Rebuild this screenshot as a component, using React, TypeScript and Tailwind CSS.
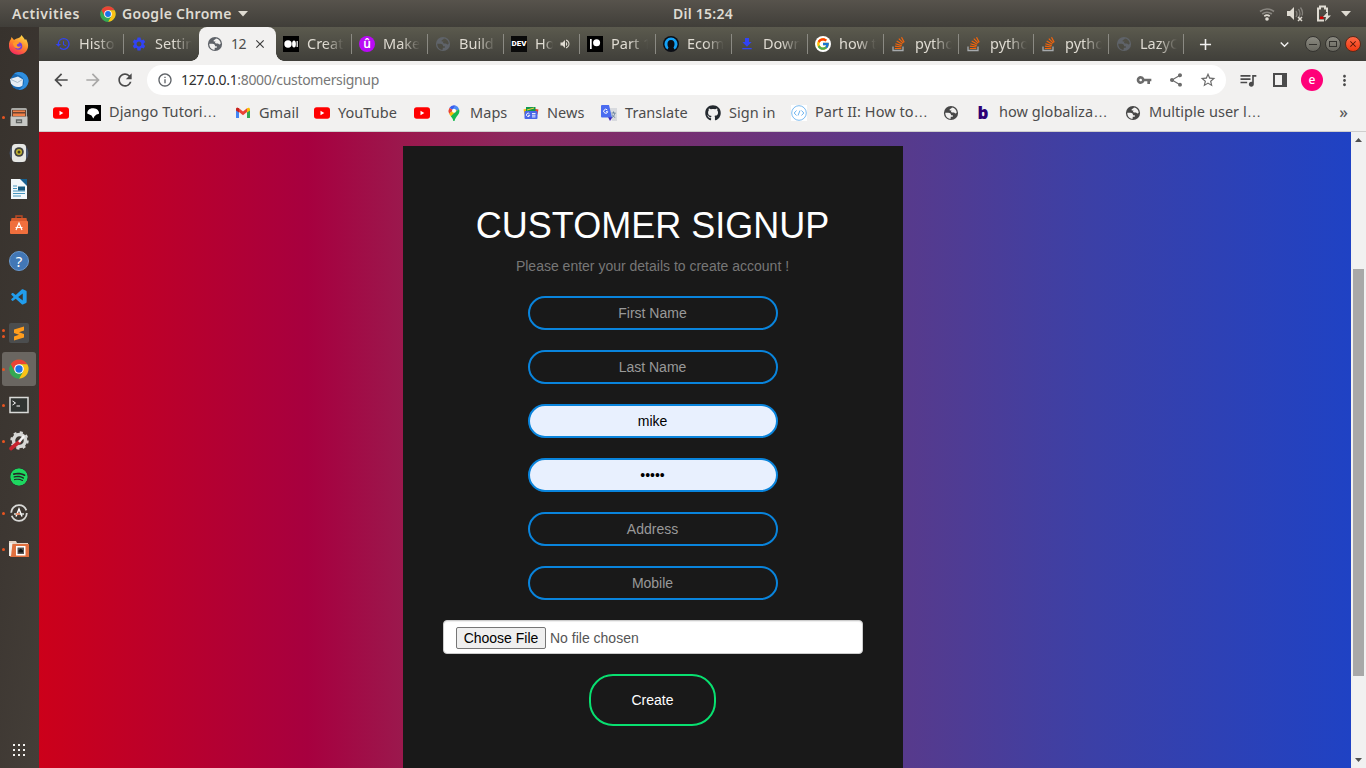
import React from "react";
import {
  MdArrowBack, MdArrowForward, MdRefresh, MdHistory, MdSettings, MdClose, MdVolumeUp,
  MdFileDownload, MdAdd, MdExpandMore, MdOutlineInfo, MdVpnKey, MdShare, MdStarBorder, MdQueueMusic,
  MdMoreVert,
} from "react-icons/md";
import { FcGoogle } from "react-icons/fc";
import { FaGithub, FaSpotify } from "react-icons/fa";
import { VscVscode } from "react-icons/vsc";

type Kids = { children?: React.ReactNode };

function Chrome({ className = "size-4" }: { className?: string }) {
  return (
    <svg viewBox="0 0 48 48" className={className}>
      <circle cx="24" cy="24" r="23" fill="#34a853" />
      <path d="M24 24 14.500 40.500 4.100 12.500A23 23 0 0 1 43.900 12.500H24Z" fill="#ea4335" />
      <path d="M43.900 12.500A23 23 0 0 1 24 47L34 29.500 24 12.500Z" fill="#fbc116" />
      <path d="M4.100 12.500 14 29.700 24 35 34 29.700 24 47A23 23 0 0 1 4.100 12.500Z" fill="#34a853" />
      <circle cx="24" cy="24" r="11.500" fill="#fff" />
      <circle cx="24" cy="24" r="8.800" fill="#1a73e8" />
    </svg>
  );
}

function StackOverflow() {
  return (
    <svg viewBox="0 0 16 16" className="size-4" fill="none" strokeWidth="1.300">
      <path d="M2 10.500V14.500H12V10.500" stroke="#a6aaad" />
      <path d="M3.800 12.500H10.300M3.900 10.200 10.400 11M4.400 7.700 10.700 9.600M5.700 5.100 11.300 8.300M7.800 2.700 12.200 7.200M10.500 1.200 13.200 6.400" stroke="#f4640a" strokeWidth="1.200" />
    </svg>
  );
}

function YouTube() {
  return (
    <svg viewBox="0 0 16 16" className="size-4">
      <rect y="2.300" width="16" height="11.400" rx="2.700" fill="#f00" />
      <path d="M6.500 5.800v4.400L10.300 8z" fill="#fff" />
    </svg>
  );
}

function Medium() {
  return (
    <svg viewBox="0 0 16 16" className="size-4">
      <path d="M0 0h16v16H0z" />
      <circle cx="5" cy="8" r="3.700" fill="#fff" />
      <ellipse cx="11" cy="8" rx="1.900" ry="3.500" fill="#fff" />
      <path d="M14.200 5v6" stroke="#fff" strokeWidth="1.200" />
    </svg>
  );
}

function Patreon() {
  return (
    <svg viewBox="0 0 16 16" className="size-4">
      <path d="M0 0h16v16H0z" />
      <path d="M3 3h1.700v10H3z" fill="#fff" />
      <circle cx="9.600" cy="6.800" r="3.500" fill="#fff" />
    </svg>
  );
}

function Head() {
  return (
    <svg viewBox="0 0 16 16" className="size-4">
      <circle cx="8" cy="8" r="8" fill="#0b0d14" />
      <path d="M4.500 13.500A6.500 6.500 0 1 1 11.500 13.500L10.500 11.500C12 9.500 12.300 4 8 4S4 9.500 5.500 11.500Z" fill="#14a1f5" />
    </svg>
  );
}

function Django() {
  return (
    <svg viewBox="0 0 16 16" className="size-4">
      <path d="M0 0h16v16H0z" />
      <path d="M2.200 8.500C2.200 5 5 2.800 8.500 3.200c3.500.2 6 2.800 5.500 5.600L11.500 9.500 9.500 11.200 8.300 13.500 6.500 10.500Z" fill="#fff" />
    </svg>
  );
}

function Gmail() {
  return (
    <svg viewBox="0 0 16 16" className="size-4">
      <path d="M1 4v9h3V7z" fill="#4285f4" />
      <path d="M12 7v6h3V4z" fill="#34a853" />
      <path d="M1 4.300C1 2.500 2.700 2.300 4 3.300L8 6.500l4-3.200v3.800L8 10.300 4 7.100Z" fill="#ea4335" />
      <path d="M12 3.300c1.500-1.100 3-.5 3 1.200v1L12 7.600z" fill="#fbbc04" />
      <path d="M4 3.300C2.500 2.200 1 2.800 1 4.500v1l3 2.100z" fill="#c5221f" />
    </svg>
  );
}

function Maps() {
  return (
    <svg viewBox="0 0 16 16" className="size-4">
      <path d="M3.300 3.100A5.700 5.700 0 0 1 9.500.5L7 5z" fill="#3b5ff0" />
      <path d="M9.500.5A5.700 5.700 0 0 1 13 4L6 11.500 4.500 7Z" fill="#4b8bf5" />
      <path d="M3.300 3.100A5.800 5.800 0 0 0 3.200 9L7 5Z" fill="#ea4335" />
      <path d="M3.200 9 8 4l3 1.500-6 6Z" fill="#fbbc04" />
      <path d="M13 4C15 9 9.500 11 8.500 16H7.300C7 13.500 5.800 12.500 4.800 11.200Z" fill="#16b950" />
      <circle cx="8" cy="5.800" r="2" fill="#fff" />
    </svg>
  );
}

function News() {
  return (
    <svg viewBox="0 0 16 16" className="size-4">
      <path d="m.5 4.500 4-1 1 5-4 1z" fill="#fbbc04" />
      <path d="m10 3.500 5.500 1-1 5-5-1z" fill="#ea4335" />
      <path d="M3 2h9.500v6H3z" fill="#12994a" />
      <path d="m4 5 7-2" stroke="#f4cf3b" />
      <rect x="1.500" y="6" width="13" height="8" rx="1" fill="#4866e8" />
      <path d="M6.500 8.800a1.700 1.700 0 1 0 .3 1.500H5M9 8.500h3.500M9 10.200h3.500M9 11.900h3.500" stroke="#fff" fill="none" strokeWidth=".9" />
    </svg>
  );
}

function Translate() {
  return (
    <svg viewBox="0 0 16 16" className="size-4">
      <path d="M7 3h9v13h-5z" fill="#d8dade" />
      <path d="m7 12 4.500 0-2.500 4z" fill="#3d22b8" />
      <path d="M1 0h7l3 12.500H1a1 1 0 0 1-1-1V1a1 1 0 0 1 1-1z" fill="#4b6cf0" />
      <path d="M6.300 5a2 2 0 1 0 .4 1.700H5" fill="none" stroke="#fff" />
      <path d="M10.500 8h4M12.500 6.500V8M14 8c-.5 2-1.500 3.500-3 4.500M11.200 9.500c.6 1.500 1.700 2.500 3 3" fill="none" stroke="#607d9b" strokeWidth=".9" />
    </svg>
  );
}

function CodeBadge() {
  return (
    <svg viewBox="0 0 16 16" className="size-4" fill="none" stroke="#5aa9ec">
      <path d="M0 0h16v16H0z" fill="#fff" stroke="none" />
      <circle cx="8" cy="8" r="7.300" strokeWidth=".8" />
      <path d="m5.500 5.500-2.300 2.500 2.300 2.500M10.500 5.500l2.300 2.500-2.300 2.500M9 5.500l-2 5" strokeWidth=".9" />
    </svg>
  );
}

function LetterB() {
  return <span className="flex size-4 items-center justify-center text-[17px] leading-none font-black text-[#2c0076]">b</span>;
}

function Globe({ className }: { className: string }) {
  return (
    <svg viewBox="0 0 16 16" className={`size-4 ${className}`} fill="currentColor">
      <path
        fillRule="evenodd"
        d="M8 .9a7.100 7.100 0 1 0 0 14.200A7.100 7.100 0 0 0 8 .9ZM2.300 7.700H5.400C7.300 7.700 8.100 8.700 8 10.300H9.800V11.700H7.700V13.700C4.700 13.900 2.200 11.200 2.300 7.700ZM9 2.400C11.700 2.800 13.600 5 13.700 7.600C13.200 8.600 12.200 8.800 11.600 8C11.100 7.300 10.300 7.600 9.300 7.500C7.900 7.300 7.600 6.200 8.600 5.400H6.700V4.200C6.700 3.400 8.400 3.900 9 2.400Z"
      />
    </svg>
  );
}

const TabGlobe = () => <Globe className="text-[#5f6369]" />;
const MarkGlobe = () => <Globe className="text-[#474747]" />;

function Tab({ icon, title, sound, narrow }: { icon: React.ReactNode; title: string; sound?: boolean; narrow?: boolean }) {
  return (
    <div className={`flex shrink-0 items-center pl-[7px] ${narrow ? "w-[75px]" : "w-[76px]"}`}>
      <span className="flex w-4 shrink-0 items-center justify-center">{icon}</span>
      <span className={`mb-[2px] ml-2 h-6 shrink-0 overflow-hidden whitespace-nowrap text-[14.500px] leading-6 text-[#dfdbd2] [mask-image:linear-gradient(to_right,#000_50%,transparent)] ${sound ? "w-[18px]" : "w-[37px]"}`}>{title}</span>
      {sound && <MdVolumeUp className="ml-[6px] size-3 shrink-0 text-[#dfdbd2]" />}
      <span className="ml-auto h-5 w-px bg-[#8b8a83]" />
    </div>
  );
}

function ActiveTab() {
  return (
    <div className="relative -ml-px flex w-[77px] shrink-0 items-center rounded-t-lg bg-[#f2f1f0] pl-2">
      <span className="absolute bottom-0 -left-2 size-2 bg-[radial-gradient(circle_at_0_0,transparent_7.500px,#f2f1f0_8px)]" />
      <span className="absolute -right-2 bottom-0 size-2 bg-[radial-gradient(circle_at_100%_0,transparent_7.500px,#f2f1f0_8px)]" />
      <TabGlobe />
      <span className="mb-[2px] ml-[8px] text-[14px] tracking-[-.4px] text-[#4c4c4c]">12</span>
      <MdClose className="ml-[7px] size-[14px] text-[#3c3c3c]" />
    </div>
  );
}

function Bookmark({ icon, label, width }: { icon: React.ReactNode; label?: string; width?: string }) {
  const cut = label?.endsWith("…");
  return (
    <div className="mr-4 flex shrink-0 items-center">
      <span className="flex w-4 items-center justify-center">{icon}</span>
      {label && (
        <span className={`mb-[2px] ml-2 whitespace-nowrap text-[14.500px] leading-5 tracking-[.05px] text-[#4c4c4c] ${width}`}>
          {cut ? label.slice(0, -1) : label}
          {cut && <span className="font-['Liberation_Sans']">…</span>}
        </span>
      )}
    </div>
  );
}

function DockItem({ children, running, active }: Kids & { running?: number; active?: boolean }) {
  return (
    <div className="flex h-9 w-[39px] shrink-0 items-center">
      <div className={`ml-[2px] flex h-[34px] w-[34px] items-center rounded-[3px] ${active ? "bg-[#6a6661]" : ""}`}>
        <div className="flex w-[7px] flex-col items-start gap-[3px]">
          {running && <span className="size-[3px] rounded-full bg-[#e95420]" />}
          {running === 2 && <span className="size-[3px] rounded-full bg-[#e95420]" />}
        </div>
        <div className="flex size-5 items-center justify-center">{children}</div>
      </div>
    </div>
  );
}

function Dock() {
  return (
    <nav className="flex w-[39px] shrink-0 flex-col bg-[linear-gradient(100deg,#37322d,#3d3732_55%,#443e38)]">
      <DockItem>
        <svg viewBox="0 0 20 20" className="size-5">
          <defs>
            <linearGradient id="fox" x1=".8" y1="0" x2=".3" y2="1"><stop offset="0" stopColor="#ffe14a" /><stop offset=".5" stopColor="#ff8a2a" /><stop offset="1" stopColor="#f5265f" /></linearGradient>
          </defs>
          <path d="M12.500 0c1 2 3 3 3.500 5l1-1c3 5 3 10-1 13.500S4 20 1.500 16-.5 7 2 4l.5-2 2.500 3c2-2 6-1 7.500-5Z" fill="url(#fox)" />
          <circle cx="9.500" cy="11" r="3.800" fill="#7540d8" />
          <path d="M4 8c3-2 5.500-1.500 6.500 0l-2.500 1.500c-1 2 2 3 4 1.500-1 4-8 3-8-3Z" fill="#ff9a2b" />
        </svg>
      </DockItem>
      <DockItem>
        <svg viewBox="0 0 20 20" className="size-5">
          <circle cx="10.500" cy="10" r="9" fill="#1767b2" />
          <path d="M5 2.500c6-4 15 0 14.500 8-1 6-6 9-10 8 6-2 8-11 1-14Z" fill="#2f8fe0" />
          <path d="m1 8 8-2.500 5 3-.5 6c-4 3-9.500 1-11.500-2Z" fill="#e6ecf3" />
          <path d="m2 8.500 6.500 3 5-3" fill="none" stroke="#a8bac9" />
        </svg>
      </DockItem>
      <DockItem running={1}>
        <svg viewBox="0 0 20 20" className="size-5">
          <rect x="2" y="1" width="16" height="18" rx="1.500" fill="#a9a9a5" />
          <path d="M3 3h14v7H3z" fill="#6d4330" /><path d="M4 3.500h12v1.500H4zM4 6.500h12v2.500H4z" fill="#ef8048" />
          <path d="M1.500 9.500h17V19h-17z" fill="#c7c8c5" /><path d="M7.500 15.500v-2.500h5v2.500z" fill="none" stroke="#5f6260" strokeWidth="1.300" />
        </svg>
      </DockItem>
      <DockItem>
        <svg viewBox="0 0 20 20" className="size-5">
          <circle cx="10" cy="10" r="9.500" fill="#47536a" />
          <rect x="3" y="1" width="14" height="18" rx="3.500" fill="#e6e7e4" />
          <circle cx="10" cy="9" r="4.800" fill="#41413f" /><circle cx="10" cy="9" r="3" fill="#c3b632" /><circle cx="10" cy="9" r="1.500" fill="#403c25" />
        </svg>
      </DockItem>
      <DockItem>
        <svg viewBox="0 0 20 20" className="size-5">
          <path d="M2 0h11l5 6v14H2z" fill="#f4f8fa" /><path d="M11 0h7v7z" fill="#18608f" />
          <path d="M4 7h4M4 9.500h4M4 12h12M4 14.500h12M4 17h8" stroke="#4795bd" /><path d="M9 7.500h7v4H9z" fill="#175a80" />
        </svg>
      </DockItem>
      <DockItem>
        <svg viewBox="0 0 20 20" className="size-5">
          <path d="M7 4V1h6v3" fill="none" stroke="#bd4a25" strokeWidth="1.400" /><path d="M2.500 3h15l1 5h-17z" fill="#d85a2c" />
          <rect x="1" y="6" width="18" height="13" rx="1" fill="#f06f3d" />
          <path d="m7 15 3-7 3 7M6.500 12.500h7" fill="none" stroke="#fff" strokeWidth="1.200" />
        </svg>
      </DockItem>
      <DockItem>
        <span className="flex size-5 items-center justify-center rounded-full border border-[#6998cd] bg-[#4277b5] text-[15px] leading-none text-white">?</span>
      </DockItem>
      <DockItem><VscVscode className="size-[19px] text-[#219ded]" /></DockItem>
      <DockItem running={2}>
        <svg viewBox="0 0 20 20" className="size-5">
          <rect width="20" height="20" rx="2" fill="#4b4d4e" /><path d="m5 6.500 10-3v4l-5 1.700 5 1.800v3.500l-10 3v-4l5-1.700-5-1.800z" fill="#ff9d1d" />
        </svg>
      </DockItem>
      <DockItem running={1} active><Chrome className="size-5" /></DockItem>
      <DockItem running={1}>
        <svg viewBox="0 0 20 20" className="size-5">
          <path d="M1 2.500h18v15H1z" fill="#303432" stroke="#d9dad8" strokeWidth="1.500" /><path d="m3.500 6 3 2-3 2M7.500 11H11" fill="none" stroke="#fff" />
        </svg>
      </DockItem>
      <DockItem running={1}>
        <svg viewBox="0 0 20 20" className="size-5">
          <circle cx="10.500" cy="9.500" r="6" fill="none" stroke="#d7d7d5" strokeWidth="3.500" />
          <circle cx="10.500" cy="9.500" r="8.200" fill="none" stroke="#d7d7d5" strokeWidth="2" strokeDasharray="3 3.450" />
          <path d="m2 17.500 8-6.500" stroke="#c7232e" strokeWidth="3.600" strokeLinecap="round" /><path d="m10 11 5-6" stroke="#f5f5f5" strokeWidth="2.500" />
        </svg>
      </DockItem>
      <DockItem><FaSpotify className="size-[18px] rounded-full bg-[#252525] text-[#1ed760]" /></DockItem>
      <DockItem running={1}>
        <svg viewBox="0 0 20 20" className="size-5" fill="none">
          <circle cx="10" cy="10" r="7.800" stroke="#d9d9d7" strokeWidth="1.800" strokeDasharray="21.500 3" />
          <path d="m7 13.500 3-7.500 3 7.500" stroke="#fff" strokeWidth="1.500" /><path d="M5 11h10" stroke="#e8eceb" strokeWidth="1.400" /><path d="M7 11h4" stroke="#ef6a35" strokeWidth="1.300" />
        </svg>
      </DockItem>
      <DockItem running={1}>
        <svg viewBox="0 0 20 20" className="size-5">
          <path d="M0 2h7l1 2h11v13H0z" fill="#e4d2c3" /><path d="M3 5h17v13H1z" fill="#e0703f" /><path d="M0 4h3.500L2 17H0z" fill="#f3eee9" />
          <path d="M7 7h9.500v9.500H7z" fill="#fff" /><path d="M8.500 8.500H15v6.500H8.500z" fill="#555" /><path d="M9.500 13.500v-2l2.250-2 2.250 2v2z" fill="#161616" />
        </svg>
      </DockItem>
      <div className="mt-auto mb-3 ml-[13px] grid w-3 grid-cols-3 gap-[3px]">
        {Array.from({ length: 9 }, (_, i) => <span key={i} className="size-[2px] bg-[#f4f3f0]" />)}
      </div>
    </nav>
  );
}

function SystemBar() {
  return (
    <header className="grid h-[27px] shrink-0 grid-cols-[1fr_auto_1fr] items-center bg-[linear-gradient(#57534c,#403e39)] text-[14px] font-semibold text-[#dfdbd2]">
      <div className="flex items-center pl-3">
        <span className="w-[88px] tracking-[.55px]">Activities</span>
        <Chrome />
        <span className="ml-[6px] w-[112px] whitespace-nowrap tracking-[.3px]">Google Chrome</span>
        <svg viewBox="0 0 10 6" className="ml-[4px] h-[6px] w-[10px]"><path d="M0 0h10L5 5.500z" fill="#dfdbd2" /></svg>
      </div>
      <span className="ml-[41px] w-[61px] whitespace-nowrap tracking-[.25px]">Dil 15:24</span>
      <div className="flex items-center justify-end pr-[15px] text-[#dfdbd2]">
        <svg viewBox="0 0 16 14" className="h-[14px] w-4" fill="none" strokeWidth="1.700">
          <path d="M1 4.500q7-5 14 0M3.200 7q4.800-3.500 9.600 0" stroke="#898680" /><path d="M5.300 9.200q2.700-2 5.400 0" stroke="#dfdbd2" /><circle cx="8" cy="12" r="1.800" fill="#dfdbd2" />
        </svg>
        <svg viewBox="0 0 18 16" className="ml-[11px] h-4 w-[18px]" fill="none">
          <path d="M1 5h3l4-4v13l-4-4H1z" fill="#dfdbd2" /><path d="M10 5q2 3 0 6M12.500 3q3 5 0 9M14.500 1.500q3 4 1.500 8" stroke="#85827c" strokeWidth="1.300" /><path d="m12 11 4 4m0-4-4 4" stroke="#dfdbd2" strokeWidth="1.500" />
        </svg>
        <svg viewBox="0 0 15 17" className="ml-[12px] h-[17px] w-[15px]" fill="none">
          <path d="M8 15.500H2V3.500H4V1.500H9V3.500H11V7" stroke="#dfdbd2" strokeWidth="2" /><path d="M4 11.500h3.500V14H4z" fill="#d40000" /><path d="m12 6.500-5 5.500h3l-1 4.500 6-6h-3z" fill="#dfdbd2" />
        </svg>
        <svg viewBox="0 0 10 6" className="ml-[10px] h-[6px] w-[10px]"><path d="M0 0h10L5 5.500z" fill="#dfdbd2" /></svg>
      </div>
    </header>
  );
}

function TabStrip() {
  return (
    <div className="flex h-[34px] shrink-0 bg-[linear-gradient(#5b5a4e,#403f3a)] pl-[9px]">
      <Tab icon={<MdHistory className="size-4 text-[#3143f5]" />} title="History" />
      <Tab icon={<MdSettings className="size-4 text-[#3143f5]" />} title="Settings" />
      <ActiveTab />
      <Tab icon={<Medium />} title="Create" />
      <Tab icon={<span className="flex size-4 items-center justify-center rounded-full bg-[#b90af5] text-[12px] leading-none font-semibold text-white">û</span>} title="Make a" />
      <Tab icon={<TabGlobe />} title="Build a" />
      <Tab icon={<span className="flex h-4 w-4 items-center justify-center bg-[#0a0a0a] font-['Roboto'] text-[8px] leading-none font-black text-white">DEV</span>} title="How" sound />
      <Tab icon={<Patreon />} title="Part 1" />
      <Tab icon={<Head />} title="Ecomm" />
      <Tab icon={<MdFileDownload className="size-4 text-[#3143f5]" />} title="Downl" />
      <Tab icon={<span className="flex size-4 items-center justify-center rounded-full bg-white"><FcGoogle className="size-[14px]" /></span>} title="how to" />
      <Tab narrow icon={<StackOverflow />} title="python" />
      <Tab narrow icon={<StackOverflow />} title="python" />
      <Tab narrow icon={<StackOverflow />} title="python" />
      <Tab narrow icon={<TabGlobe />} title="LazyC" />
      <div className="flex flex-1 items-center pr-[5px]">
        <MdAdd className="ml-[12px] size-[19px] text-[#f2f1f0]" />
        <MdExpandMore className="ml-auto size-[17px] text-[#f2f1f0]" />
        <div className="ml-[12px] flex gap-1">
          <span className="flex size-4 items-center justify-center rounded-full border border-[#353430] bg-[linear-gradient(#8b8a81,#68675f)]"><i className="h-px w-2 bg-[#33322e]" /></span>
          <span className="flex size-4 items-center justify-center rounded-full border border-[#353430] bg-[linear-gradient(#8b8a81,#68675f)]"><i className="h-[6px] w-2 border border-[#33322e]" /></span>
          <span className="flex size-4 items-center justify-center rounded-full border border-[#5a2a1b] bg-[linear-gradient(#ff6a46,#ef3911)]"><MdClose className="size-[10px] text-[#4a1306]" /></span>
        </div>
      </div>
    </div>
  );
}

function Toolbar() {
  return (
    <div className="flex h-[38px] shrink-0 items-center bg-[#f2f1f0] text-[#4b4b4b]">
      <MdArrowBack className="ml-3 size-5" />
      <MdArrowForward className="ml-3 size-5 text-[#a9a8a7]" />
      <MdRefresh className="ml-3 size-5" />
      <div className="ml-3 flex h-[30px] w-[1079px] items-center rounded-full bg-white pl-[10px] pr-[10px]">
        <MdOutlineInfo className="size-4 text-[#5f6368]" />
        <span className="mb-[2px] ml-2 text-[14px] tracking-[-.33px] text-[#777]"><span className="text-[#303030]">127.0.0.1</span>:8000/customersignup</span>
        <MdVpnKey className="ml-auto size-4 text-[#6b6b6b]" />
        <MdShare className="ml-4 size-4 text-[#6b6b6b]" />
        <MdStarBorder className="ml-4 size-4 scale-110 text-[#6b6b6b]" />
      </div>
      <MdQueueMusic className="ml-[12px] size-5" />
      <svg viewBox="0 0 14 14" className="ml-[15px] size-[14px]"><path d="M1 1h12v12H1z" fill="none" stroke="currentColor" strokeWidth="2" /><path d="M9 1h4v12H9z" fill="currentColor" /></svg>
      <span className="ml-[14px] flex size-[22px] items-center justify-center rounded-full bg-[#ff0078] pb-px text-[12px] leading-none font-medium text-white">e</span>
      <MdMoreVert className="ml-[13px] size-[17px]" />
    </div>
  );
}

function Bookmarks() {
  return (
    <div className="flex h-[33px] shrink-0 items-center border-b border-[#cfcecd] bg-[#f2f1f0] pb-[5px] pl-[14px]">
      <Bookmark icon={<YouTube />} />
      <Bookmark icon={<Django />} label="Django Tutori…" width="w-[110px]" />
      <Bookmark icon={<Gmail />} label="Gmail" width="w-[39px]" />
      <Bookmark icon={<YouTube />} label="YouTube" width="w-[60px]" />
      <Bookmark icon={<YouTube />} />
      <Bookmark icon={<Maps />} label="Maps" width="w-[37px]" />
      <Bookmark icon={<News />} label="News" width="w-[38px]" />
      <Bookmark icon={<Translate />} label="Translate" width="w-[64px]" />
      <Bookmark icon={<FaGithub className="size-4 text-[#24292f]" />} label="Sign in" width="w-[46px]" />
      <Bookmark icon={<CodeBadge />} label="Part II: How to…" width="w-[112px]" />
      <Bookmark icon={<MarkGlobe />} />
      <Bookmark icon={<LetterB />} label="how globaliza…" width="w-[110px]" />
      <Bookmark icon={<MarkGlobe />} label="Multiple user l…" width="w-[112px]" />
      <span className="mr-[18px] mb-[2px] ml-auto text-[16px] leading-5 font-medium text-[#5c5c5c]">»</span>
    </div>
  );
}

const field = "flex h-[34px] w-[250px] items-center justify-center rounded-[24px] border-2 border-[#0984dc] pr-px text-[14px]";

function SignupPage() {
  return (
    <main className="flex flex-1 justify-center bg-[linear-gradient(to_right,#cc001a_0%,#a7003f_20.500%,#9b184d_27.700%,#8c285e_36%,#573a8c_66%,#3c40a6_80%,#1f42c4_100%)] pr-[84px] font-['Liberation_Sans',sans-serif]">
      <form className="mt-[14px] flex w-[500px] flex-col items-center bg-[#191919] pt-[60px]">
        <h1 className="mr-px text-[36px] leading-[40px] whitespace-nowrap text-white">CUSTOMER SIGNUP</h1>
        <p className="mt-[10px] mr-px text-[14px] leading-5 text-[#777]">Please enter your details to create account !</p>
        <div className="mt-5 flex flex-col gap-5">
          <div className={`${field} text-[#999]`}>First Name</div>
          <div className={`${field} text-[#999]`}>Last Name</div>
          <div className={`${field} bg-[#e8f0fe] text-black`}>mike</div>
          <div className={`${field} bg-[#e8f0fe] text-black`}>•••••</div>
          <div className={`${field} text-[#999]`}>Address</div>
          <div className={`${field} text-[#999]`}>Mobile</div>
        </div>
        <div className="mt-5 flex h-[34px] w-[420px] items-center rounded-[4px] border border-[#ccc] bg-white pt-[2px] pl-3 text-[14px] text-[#555] shadow-[inset_0_1px_1px_rgba(0,0,0,.075)]">
          <span className="flex h-[22px] w-[90px] items-center justify-center rounded-[2px] border border-[#767676] bg-[#efefef] text-black">Choose File</span>
          <span className="ml-1">No file chosen</span>
        </div>
        <button type="button" className="mt-5 mr-px h-[52px] w-[127px] rounded-[24px] border-2 border-[#08e070] text-[14px] text-white">Create</button>
      </form>
    </main>
  );
}

function Scrollbar() {
  return (
    <div className="flex w-[15px] shrink-0 flex-col items-center bg-[#f1f1f1]">
      <svg viewBox="0 0 7 4" className="mt-[6px] h-1 w-[7px] shrink-0"><path d="M0 4 3.500 0 7 4z" fill="#505050" /></svg>
      <div className="mt-[127px] h-[407px] w-[11px] shrink-0 bg-[#a8a8a8]" />
      <svg viewBox="0 0 7 4" className="mt-auto mb-[6px] h-1 w-[7px] shrink-0"><path d="M0 0h7L3.500 4z" fill="#505050" /></svg>
    </div>
  );
}

export default function App() {
  return (
    <div className="flex h-[768px] w-[1366px] flex-col overflow-hidden font-['Noto_Sans',sans-serif]">
      <SystemBar />
      <div className="flex min-h-0 flex-1">
        <Dock />
        <div className="flex min-w-0 flex-1 flex-col">
          <TabStrip />
          <Toolbar />
          <Bookmarks />
          <div className="flex min-h-0 flex-1">
            <SignupPage />
            <Scrollbar />
          </div>
        </div>
      </div>
    </div>
  );
}
